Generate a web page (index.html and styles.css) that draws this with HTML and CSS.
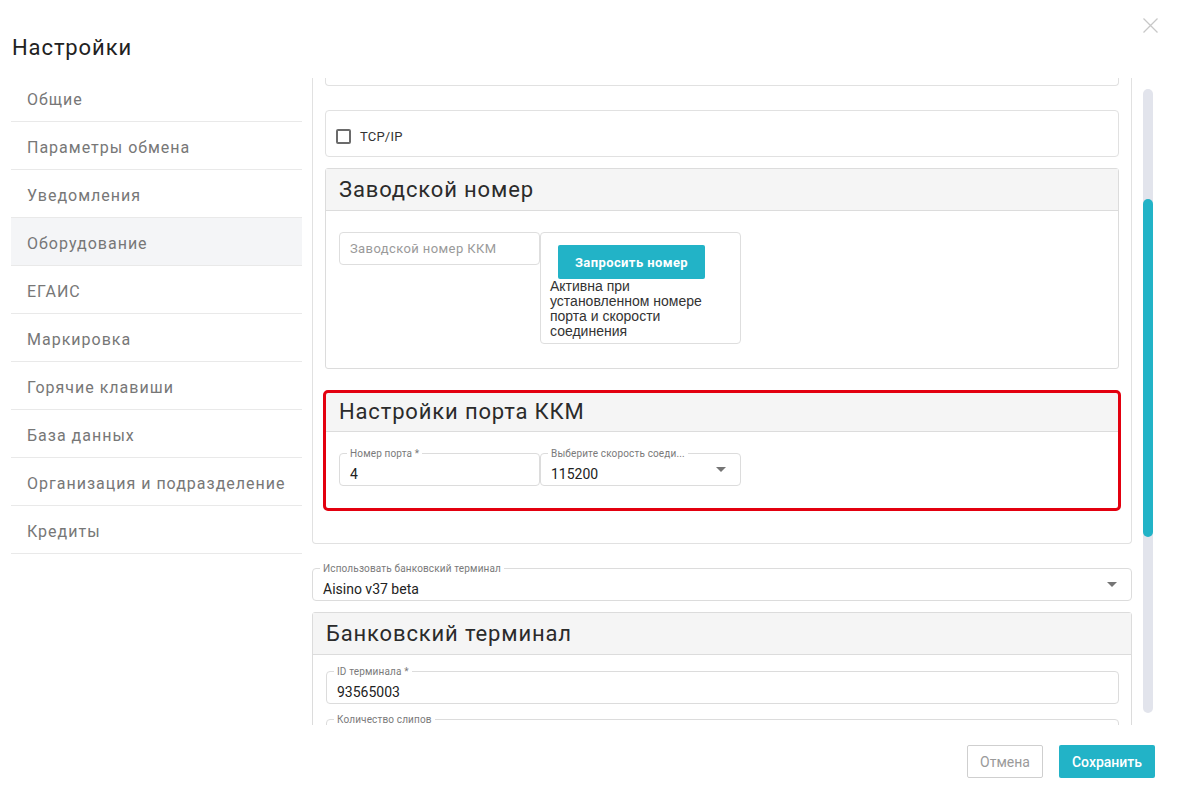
FILE: index.html
```html
<!DOCTYPE html>
<html lang="ru">
<head>
<meta charset="utf-8">
<title>Настройки</title>
<link rel="stylesheet" href="styles.css">
</head>
<body>
<div class="modal">
  <button class="close" aria-label="Закрыть">
    <svg width="15" height="15" viewBox="0 0 15 15"><path d="M0.5 0.5 L14.5 14.5 M14.5 0.5 L0.5 14.5" stroke="#c8c8c8" stroke-width="1.3" fill="none"/></svg>
  </button>
  <h1 class="title">Настройки</h1>
  <div class="main">
    <nav class="sidebar">
      <div class="nav-item">Общие</div>
      <div class="nav-item">Параметры обмена</div>
      <div class="nav-item">Уведомления</div>
      <div class="nav-item active">Оборудование</div>
      <div class="nav-item">ЕГАИС</div>
      <div class="nav-item">Маркировка</div>
      <div class="nav-item">Горячие клавиши</div>
      <div class="nav-item">База данных</div>
      <div class="nav-item">Организация и подразделение</div>
      <div class="nav-item">Кредиты</div>
    </nav>
    <div class="viewport">
      <div class="card">
        <div class="stub"></div>
        <div class="tcp">
          <span class="checkbox"></span>
          <span class="tcp-label">TCP/IP</span>
        </div>
        <section class="section serial">
          <div class="section-head">Заводской номер</div>
          <div class="section-body serial-body">
            <div class="plain-input">Заводской номер ККМ</div>
            <div class="request-box">
              <button class="btn-request">Запросить номер</button>
              <div class="hint">Активна при<br>установленном номере<br>порта и скорости<br>соединения</div>
            </div>
          </div>
        </section>
        <section class="section highlight">
          <div class="section-head small">Настройки порта ККМ</div>
          <div class="section-body port-body">
            <div class="field half">
              <span class="field-label">Номер порта *</span>
              <span class="field-value">4</span>
            </div>
            <div class="field half">
              <span class="field-label">Выберите скорость соеди...</span>
              <span class="field-value">115200</span>
              <span class="arrow"></span>
            </div>
          </div>
        </section>
      </div>
      <div class="field terminal-select">
        <span class="field-label">Использовать банковский терминал</span>
        <span class="field-value">Aisino v37 beta</span>
        <span class="arrow"></span>
      </div>
      <section class="section bank">
        <div class="section-head">Банковский терминал</div>
        <div class="section-body bank-body">
          <div class="field">
            <span class="field-label">ID терминала *</span>
            <span class="field-value">93565003</span>
          </div>
          <div class="field">
            <span class="field-label">Количество слипов</span>
            <span class="field-value">1</span>
          </div>
        </div>
      </section>
    </div>
    <div class="scrollbar"><div class="thumb"></div></div>
  </div>
  <div class="footer">
    <button class="btn-cancel">Отмена</button>
    <button class="btn-save">Сохранить</button>
  </div>
</div>
</body>
</html>
```
FILE: styles.css
```css
* { box-sizing: border-box; }

body {
  margin: 0;
  background: #fff;
  font-family: Roboto, "Liberation Sans", Arial, sans-serif;
  color: #333;
}

.modal {
  position: relative;
  width: 1178px;
  height: 800px;
  overflow: hidden;
  background: #fff;
}

.close {
  position: absolute;
  top: 18px;
  right: 20px;
  width: 15px;
  height: 15px;
  padding: 0;
  border: 0;
  background: none;
  line-height: 0;
}

.title {
  margin: 0;
  padding: 35px 0 0 12px;
  font-size: 22px;
  line-height: 26px;
  font-weight: 400;
  color: #222;
  letter-spacing: 0.9px;
}

.main {
  display: flex;
  margin-top: 13px;
  padding-left: 11px;
  height: 651px;
}

.sidebar {
  flex: none;
  width: 291px;
}

.nav-item {
  padding: 16px 16px 12px;
  font-size: 16px;
  line-height: 19px;
  color: #777;
  border-bottom: 1px solid #e9e9e9;
  letter-spacing: 1px;
  white-space: nowrap;
}

.nav-item.active {
  background: #f4f5f7;
}

.viewport {
  flex: none;
  width: 820px;
  height: 647px;
  margin: 4px 0 0 10px;
  overflow: hidden;
}

.scrollbar {
  flex: none;
  width: 10px;
  height: 624px;
  margin: 15px 0 0 11px;
  background: #e2e4ec;
  border-radius: 5px;
}

.thumb {
  margin-top: 110px;
  height: 338px;
  background: #22b3c7;
  border-radius: 5px;
}

/* outer card */
.card {
  border: 1px solid #e1e1e1;
  border-top: 0;
  border-radius: 0 0 4px 4px;
  padding: 0 12px 34px;
}

.stub {
  height: 8px;
  border: 1px solid #e1e1e1;
  border-top: 0;
  border-radius: 0 0 4px 4px;
}

.tcp {
  display: flex;
  align-items: center;
  height: 47px;
  margin-top: 24px;
  padding: 5px 0 0 10px;
  border: 1px solid #e1e1e1;
  border-radius: 4px;
}

.checkbox {
  width: 15px;
  height: 15px;
  border: 2px solid #6b6b6b;
  border-radius: 2px;
}

.tcp-label {
  margin-left: 9px;
  font-size: 13px;
  color: #333;
  letter-spacing: 0.2px;
}

.section {
  border: 1px solid #dcdcdc;
  border-radius: 3px;
}

.serial {
  margin-top: 11px;
}

.highlight {
  margin-top: 23px;
  outline: 3px solid #e3000f;
  outline-offset: -1px;
}

.section-head {
  padding: 8px 13px;
  font-size: 22px;
  line-height: 25px;
  color: #2b2b2b;
  background: #f5f5f5;
  border-bottom: 1px solid #dcdcdc;
  letter-spacing: 0.85px;
}

.section-head.small {
  padding: 6px 13px 7px;
}

.section-body {
  display: flex;
  padding: 21px 13px 0;
}

.serial-body {
  align-items: flex-start;
  height: 157px;
}

.port-body {
  height: 76px;
}

.plain-input {
  width: 201px;
  height: 33px;
  padding: 8px 10px;
  font-size: 13px;
  line-height: 15px;
  color: #9a9a9a;
  border: 1px solid #dedede;
  border-radius: 4px;
  letter-spacing: 0.4px;
  white-space: nowrap;
}

.request-box {
  width: 201px;
  height: 112px;
  padding: 12px 9px 0;
  border: 1px solid #dedede;
  border-radius: 4px;
}

.btn-request {
  display: block;
  width: 147px;
  height: 34px;
  margin-left: 8px;
  padding: 0;
  border: 0;
  border-radius: 2px;
  background: #22b3c7;
  color: #fff;
  font-family: Roboto, "Liberation Sans", sans-serif;
  font-size: 13px;
  font-weight: 700;
  letter-spacing: 0.4px;
}

.hint {
  font-family: "Liberation Sans", Arial, sans-serif;
  font-size: 14px;
  line-height: 15px;
  color: #333;
}

/* outlined fields */
.field {
  position: relative;
  height: 33px;
  padding: 12px 10px 0;
  border: 1px solid #dcdcdc;
  border-radius: 4px;
  font-size: 14px;
  line-height: 16px;
  color: #222;
}

.field.half {
  width: 201px;
}

.field-label {
  position: absolute;
  top: -6px;
  left: 7px;
  padding: 0 3px;
  background: #fff;
  font-size: 10px;
  line-height: 11px;
  color: #7a7a7a;
  white-space: nowrap;
  letter-spacing: 0.15px;
}

.field-value {
  display: block;
  white-space: nowrap;
}

.arrow {
  position: absolute;
  right: 14px;
  top: 13px;
  width: 0;
  height: 0;
  border-left: 5px solid transparent;
  border-right: 5px solid transparent;
  border-top: 5px solid #757575;
}

.terminal-select {
  margin-top: 24px;
}

.bank {
  margin-top: 11px;
}

.bank-body {
  flex-direction: column;
  gap: 15px;
  padding: 16px 12px 20px 13px;
}

.footer {
  display: flex;
  justify-content: flex-end;
  gap: 16px;
  padding: 20px 23px 0 0;
}

.btn-cancel,
.btn-save {
  height: 33px;
  border-radius: 2px;
  font-family: Roboto, "Liberation Sans", sans-serif;
  font-size: 14px;
}

.btn-cancel {
  width: 76px;
  border: 1px solid #cfcfcf;
  background: #fff;
  color: #9a9a9a;
}

.btn-save {
  width: 96px;
  border: 0;
  background: #22b3c7;
  color: #fff;
  font-weight: 500;
}
```
